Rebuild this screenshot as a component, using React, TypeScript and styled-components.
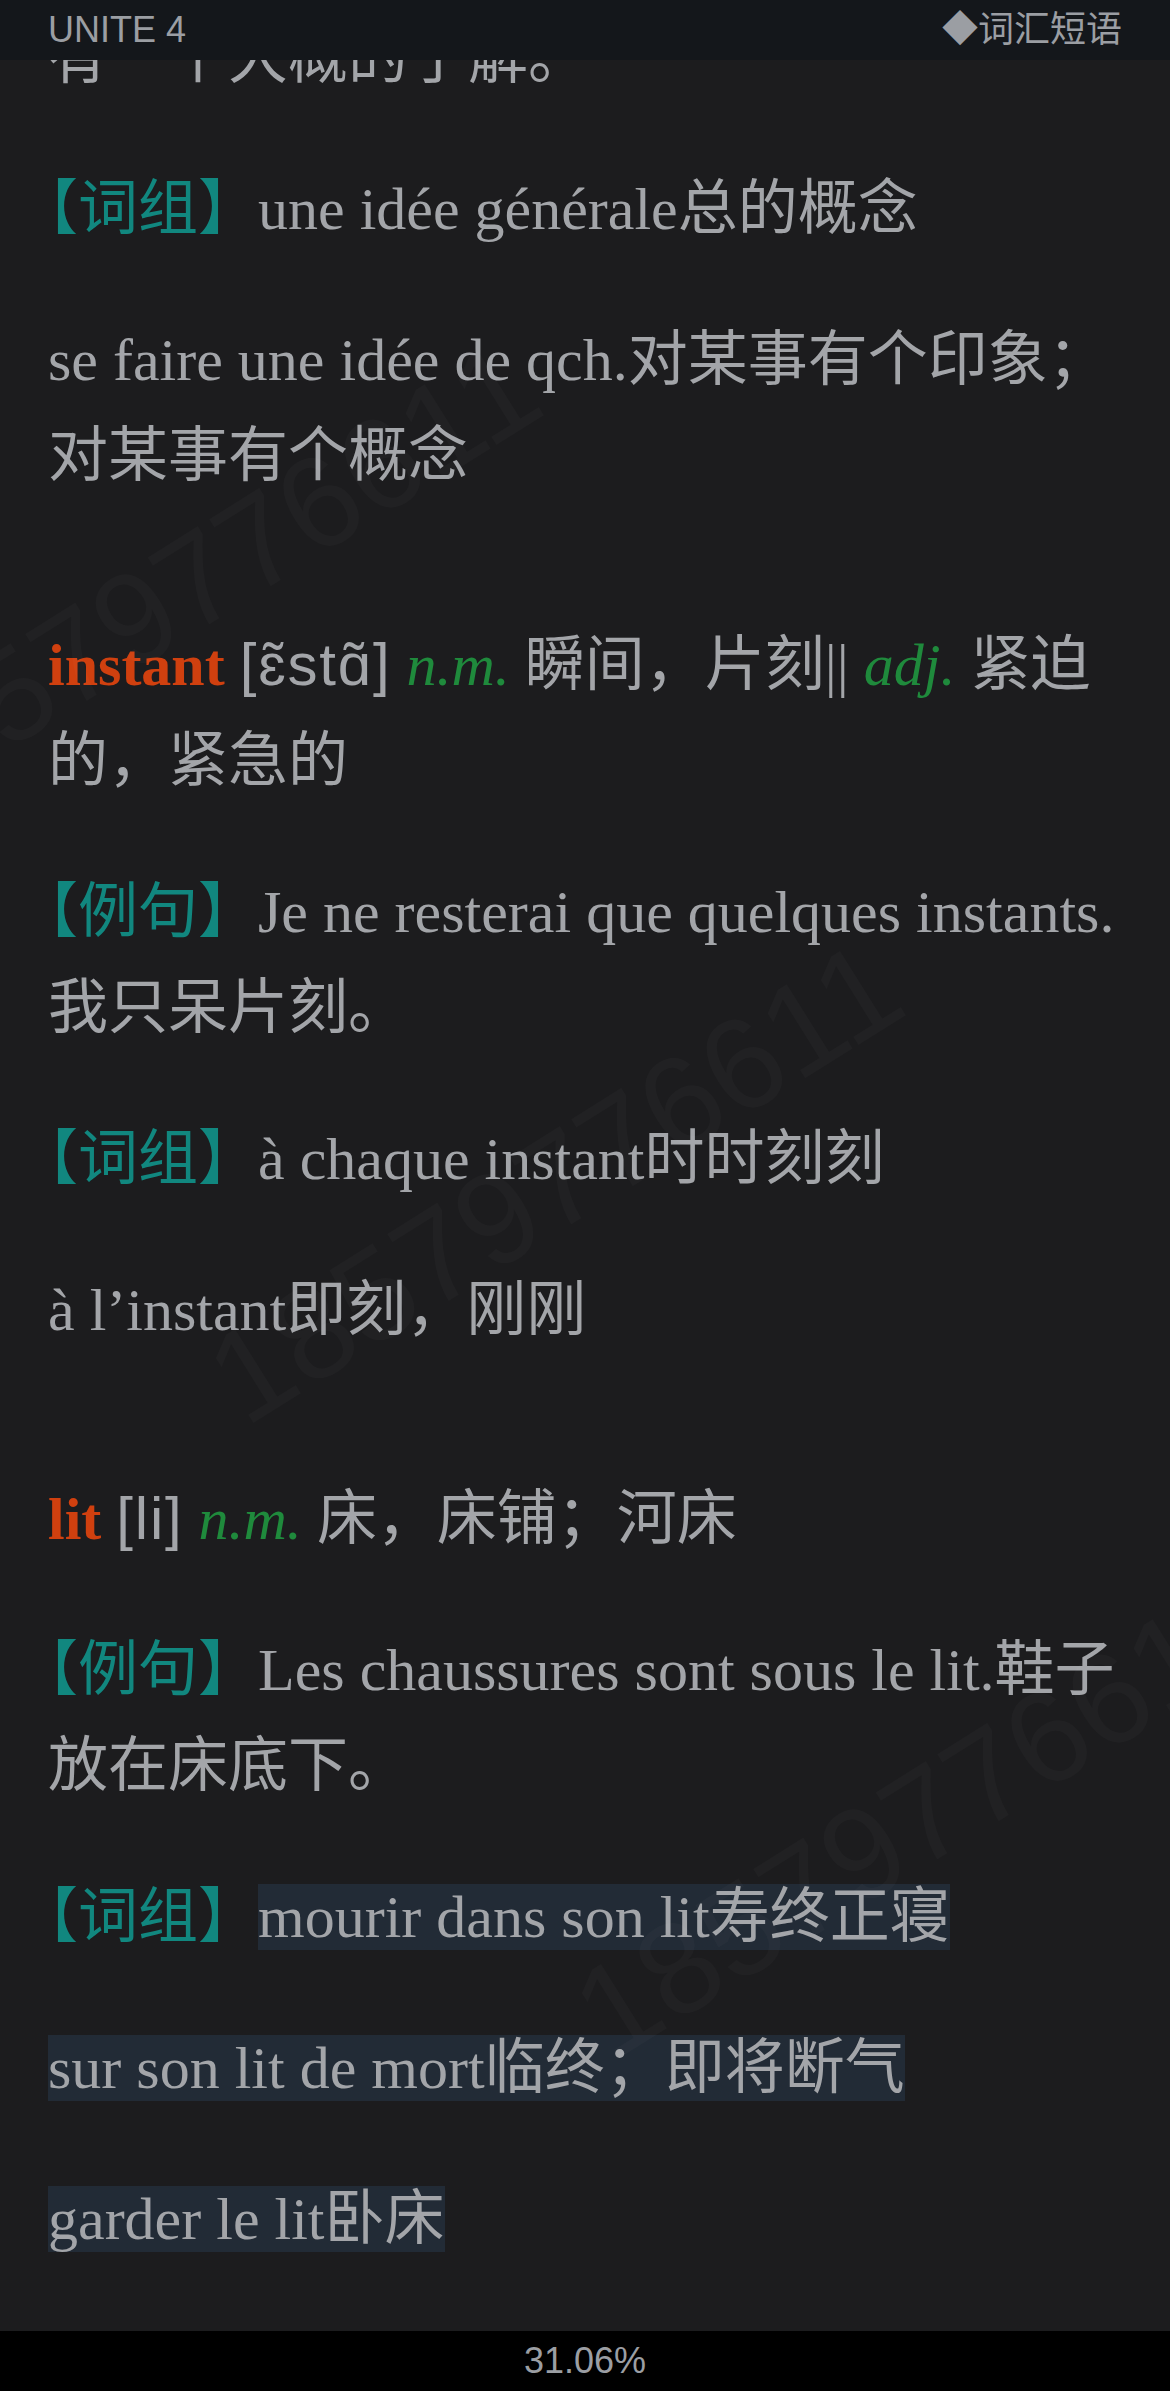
import React from "react";
import styled, { createGlobalStyle } from "styled-components";

const GlobalStyle = createGlobalStyle`
  html, body {
    margin: 0;
    padding: 0;
    background: #1c1c1e;
  }
  body {
    font-family: "Liberation Serif", "Noto Sans CJK SC", serif;
  }
  * { box-sizing: border-box; }
`;

const Screen = styled.div`
  position: relative;
  width: 1170px;
  height: 2391px;
  overflow: hidden;
  display: flex;
  flex-direction: column;
  background: #1c1c1e;
`;

const TopBar = styled.header`
  position: absolute;
  top: 0;
  left: 0;
  right: 0;
  height: 60px;
  z-index: 3;
  display: flex;
  align-items: center;
  justify-content: space-between;
  padding: 0 48px;
  background: #14171b;
  color: #9b9ea3;
  font-family: "Liberation Sans", "Noto Sans CJK SC", sans-serif;
  font-size: 36px;
  line-height: 1;
`;

const Reader = styled.main`
  position: relative;
  flex: 1;
  overflow: hidden;
  padding: 10px 48px 0;
`;

type Space = "none" | "para" | "entry";

const Para = styled.p<{ $space: Space }>`
  margin: ${(p) => (p.$space === "entry" ? 113 : p.$space === "para" ? 55 : 0)}px 0 0;
  font-family: "Liberation Serif", "Noto Sans CJK SC", serif;
  font-size: 60px;
  line-height: 96px;
  color: #a3a5a9;
`;

const Label = styled.span`
  color: #11877f;
`;

const OpenBracket = styled.span`
  margin-left: -0.5em;
`;

const HeadWord = styled.strong`
  font-weight: 700;
  color: #d0400f;
`;

const Phonetic = styled.span`
  font-family: "Liberation Sans", "DejaVu Sans", sans-serif;
  letter-spacing: 0.03em;
`;

const Pos = styled.em`
  font-style: italic;
  color: #1f8a3c;
`;

const Bars = styled.span`
  color: #a3a5a9;
`;

const Marked = styled.span`
  background: #222b36;
`;

const Footer = styled.footer`
  flex: 0 0 60px;
  display: flex;
  align-items: center;
  justify-content: center;
  background: #000;
  color: #9b9ea3;
  font-family: "Liberation Sans", sans-serif;
  font-size: 36px;
`;

const WatermarkLayer = styled.div`
  position: absolute;
  inset: 0;
  pointer-events: none;
  z-index: 2;
`;

const Mark = styled.span<{ $x: number; $y: number }>`
  position: absolute;
  left: ${(p) => p.$x}px;
  top: ${(p) => p.$y - 112}px;
  font-family: "Liberation Sans", sans-serif;
  font-size: 130px;
  line-height: 1;
  white-space: nowrap;
  color: rgba(255, 255, 255, 0.025);
  transform-origin: 0 86%;
  transform: rotate(-32deg);
`;

const Tag = ({ children }: { children: string }) => (
  <Label>
    <OpenBracket>【</OpenBracket>
    {children}】
  </Label>
);

const marks = [
  { x: -116, y: 830 },
  { x: 246, y: 1430 },
  { x: 612, y: 2065 },
];

export default function App() {
  return (
    <>
      <GlobalStyle />
      <Screen>
        <TopBar>
          <span>UNITE 4</span>
          <span>◆词汇短语</span>
        </TopBar>
        <Reader>
          <Para $space="none">有一个大概的了解。</Para>
          <Para $space="para">
            <Tag>词组</Tag>une idée générale总的概念
          </Para>
          <Para $space="para">se faire une idée de qch.对某事有个印象；对某事有个概念</Para>

          <Para $space="entry">
            <HeadWord>instant</HeadWord> <Phonetic>[ɛ̃stɑ̃]</Phonetic> <Pos>n.m.</Pos> 瞬间，片刻
            <Bars>||</Bars> <Pos>adj.</Pos> 紧迫的，紧急的
          </Para>
          <Para $space="para">
            <Tag>例句</Tag>Je ne resterai que quelques instants.我只呆片刻。
          </Para>
          <Para $space="para">
            <Tag>词组</Tag>à chaque instant时时刻刻
          </Para>
          <Para $space="para">à l’instant即刻，刚刚</Para>

          <Para $space="entry">
            <HeadWord>lit</HeadWord> <Phonetic>[li]</Phonetic> <Pos>n.m.</Pos> 床，床铺；河床
          </Para>
          <Para $space="para">
            <Tag>例句</Tag>Les chaussures sont sous le lit.鞋子放在床底下。
          </Para>
          <Para $space="para">
            <Tag>词组</Tag>
            <Marked>mourir dans son lit寿终正寝</Marked>
          </Para>
          <Para $space="para">
            <Marked>sur son lit de mort临终；即将断气</Marked>
          </Para>
          <Para $space="para">
            <Marked>garder le lit卧床</Marked>
          </Para>

          <WatermarkLayer aria-hidden="true">
            {marks.map((m, i) => (
              <Mark key={i} $x={m.x} $y={m.y}>
                18579776611
              </Mark>
            ))}
          </WatermarkLayer>
        </Reader>
        <Footer>31.06%</Footer>
      </Screen>
    </>
  );
}
